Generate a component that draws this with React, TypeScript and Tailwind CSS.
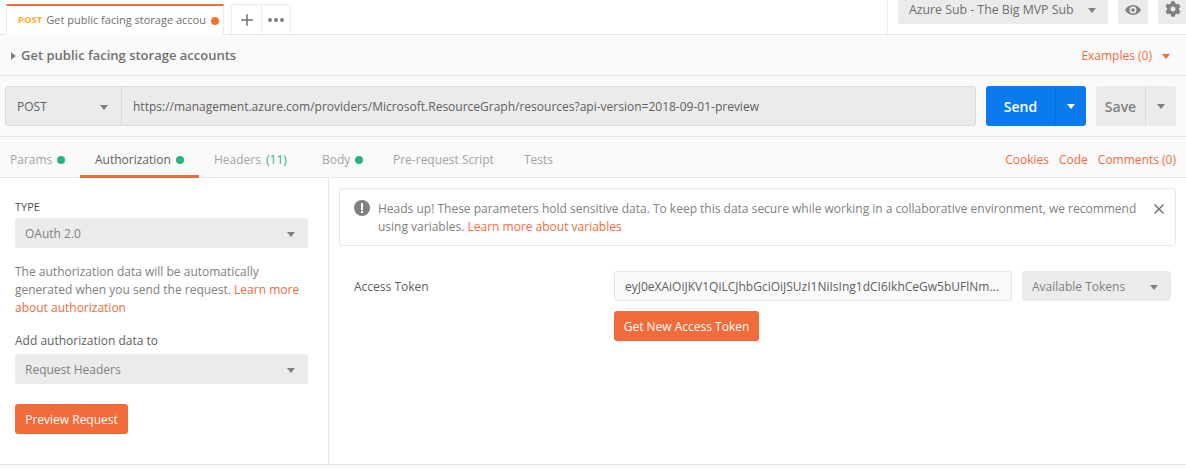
import React from 'react';
import { X, Plus } from 'lucide-react';
import { FaCog } from 'react-icons/fa';

const Caret: React.FC<{ className?: string }> = ({ className = 'border-t-[#808080]' }) => (
  <span className={`w-0 h-0 border-x-[4px] border-x-transparent border-t-[5px] ${className}`} />
);

const Dot: React.FC = () => <span className="w-2 h-2 rounded-full bg-[#26b47f] ml-[5px]" />;

const Select: React.FC<{ label: string; className: string }> = ({ label, className }) => (
  <div className={`flex items-center justify-between bg-[#ebebeb] rounded-[3px] text-[#808080] pt-[2px] ${className}`}>
    <span>{label}</span>
    <Caret />
  </div>
);

const OrangeButton: React.FC<{ label: string; className: string }> = ({ label, className }) => (
  <button className={`h-[30px] pt-[2px] bg-[#f26b3a] text-white text-xs font-medium rounded-[3px] ${className}`}>{label}</button>
);

const TopBar: React.FC = () => (
  <div className="h-[35px] flex border-b border-[#e6e6e6] bg-white">
    <div className="ml-[6px] mt-[4px] w-[218px] h-[31px] -mb-px bg-white border-x border-[#ececec] border-t-2 border-t-[#f26b3a] flex items-center pl-[11px] pr-[4px] text-[11px] text-[#707070]">
      <span className="text-[9.5px] font-bold text-[#f4b02e] mr-[4px]">POST</span>
      <span className="w-[160px] overflow-hidden whitespace-nowrap">Get public facing storage accounts</span>
      <span className="w-2 h-2 rounded-full bg-[#f5722c] ml-[5px]" />
    </div>
    <div className="ml-[7px] mt-[4px] h-[30px] flex border border-b-0 border-[#ececec] rounded-t-[3px]">
      <div className="w-[30px] flex items-center justify-center border-r border-[#ececec]">
        <Plus size={18} strokeWidth={2} className="text-[#707070]" />
      </div>
      <div className="w-[28px] flex items-center justify-center gap-[2px]">
        <span className="w-1 h-1 rounded-full bg-[#808080]" />
        <span className="w-1 h-1 rounded-full bg-[#808080]" />
        <span className="w-1 h-1 rounded-full bg-[#808080]" />
      </div>
    </div>
    <div className="ml-auto w-[299px] flex border-l border-[#ececec] pl-[10px]">
      <div className="w-[210px] h-6 pb-1 bg-[#ebebeb] rounded-b-[3px] flex items-center justify-between pl-[11px] pr-[12px] text-[12.3px] text-[#6e6e6e] font-medium">
        <span>Azure Sub - The Big MVP Sub</span>
        <Caret />
      </div>
      <div className="ml-[10px] w-[30px] h-6 pb-[5px] bg-[#ebebeb] rounded-b-[3px] flex items-center justify-center">
        <svg width="16" height="10" viewBox="0 0 16 10">
          <path fillRule="evenodd" fill="#808080" d="M8 0c3.5 0 6.4 2.2 8 5-1.600 2.800-4.500 5-8 5S1.600 7.800 0 5c1.600-2.800 4.500-5 8-5zm0 1.500a3.500 3.500 0 1 0 0 7 3.500 3.500 0 0 0 0-7zM8 3.200a1.800 1.800 0 1 1 0 3.600 1.800 1.800 0 0 1 0-3.600z" />
        </svg>
      </div>
      <div className="ml-[10px] flex-1 h-6 pt-px bg-[#ebebeb] rounded-bl-[3px] pl-[7px] flex items-start">
        <FaCog size={16} className="text-[#808080]" />
      </div>
    </div>
  </div>
);

const TitleBar: React.FC = () => (
  <div className="h-[41px] pt-[2px] flex items-center border-b border-[#e6e6e6] pl-[11px] pr-[16px]">
    <span className="w-0 h-0 border-y-[4px] border-y-transparent border-l-[5px] border-l-[#808080] mr-[5px]" />
    <span className="text-[13px] font-semibold text-[#707070]">Get public facing storage accounts</span>
    <span className="ml-auto text-xs text-[#f26b3a]">Examples (0)</span>
    <Caret className="ml-[10px] border-t-[#f26b3a]" />
  </div>
);

const UrlBar: React.FC = () => (
  <div className="h-[61px] flex items-center border-b border-[#e6e6e6] pl-[5px] pr-[10px]">
    <div className="w-[971px] h-10 flex bg-[#ebebeb] border border-[#d9d9d9] rounded-[3px]">
      <div className="w-[116px] pt-[2px] flex items-center justify-between pl-[11px] pr-[13px] border-r border-[#d9d9d9] text-xs text-[#606060]">
        <span>POST</span>
        <Caret />
      </div>
      <div className="flex-1 pt-px flex items-center pl-[11px] text-xs text-[#606060] whitespace-nowrap">
        https://management.azure.com/providers/Microsoft.ResourceGraph/resources?api-version=2018-09-01-preview
      </div>
    </div>
    <div className="ml-[10px] w-[100px] h-10 flex bg-[#097bed] rounded-[3px] text-white">
      <div className="w-[69px] pt-[2px] flex items-center justify-center text-sm font-semibold">Send</div>
      <div className="flex-1 flex items-center justify-center border-l border-[#0a6fd4]">
        <Caret className="border-t-white" />
      </div>
    </div>
    <div className="ml-[10px] w-20 h-10 flex bg-[#ebebeb] rounded-[3px]">
      <div className="w-[49px] pt-[2px] flex items-center justify-center text-sm font-semibold text-[#808080]">Save</div>
      <div className="flex-1 flex items-center justify-center border-l border-[#d9d9d9]">
        <Caret />
      </div>
    </div>
  </div>
);

const Tabs: React.FC = () => (
  <div className="h-[41px] flex items-center border-b border-[#e6e6e6] pl-[10px] pr-[10px] pt-[5px] text-xs text-[#a3a3a3]">
    <span className="flex items-center w-[70px]">Params<Dot /></span>
    <div className="relative flex items-center h-full w-[119px] text-[#606060] pl-[15px]">
      Authorization<Dot />
      <span className="absolute left-0 right-0 -bottom-px h-[3px] bg-[#f26b3a]" />
    </div>
    <span className="ml-[15px] w-[108px]">Headers <span className="text-[#26b47f] ml-0.5">(11)</span></span>
    <span className="flex items-center w-[71px]">Body<Dot /></span>
    <span className="w-[131px]">Pre-request Script</span>
    <span>Tests</span>
    <div className="ml-auto flex gap-[10px] text-[#f26b3a]">
      <span>Cookies</span>
      <span>Code</span>
      <span>Comments (0)</span>
    </div>
  </div>
);

const AuthPanel: React.FC = () => (
  <div className="w-[329px] border-r border-[#e6e6e6] pl-[15px] pr-5 pt-5 text-xs">
    <div className="text-[11px] leading-[18px] font-medium text-[#505050]">TYPE</div>
    <Select label="OAuth 2.0" className="h-[30px] px-[10px] mt-[2px] pr-[13px]" />
    <p className="mt-[15px] leading-[18px] text-[#808080] whitespace-nowrap">
      The authorization data will be automatically<br />
      generated when you send the request. <span className="text-[#f26b3a]">Learn more</span><br />
      <span className="text-[#f26b3a]">about authorization</span>
    </p>
    <div className="mt-[15px] leading-[18px] text-[#606060]">Add authorization data to</div>
    <Select label="Request Headers" className="h-[30px] px-[10px] mt-[4px] pr-[13px]" />
    <OrangeButton label="Preview Request" className="mt-5 w-[113px]" />
  </div>
);

const TokenPanel: React.FC = () => (
  <div className="flex-1 pl-[10px] pr-[10px] pt-[10px] text-xs">
    <div className="relative h-[58px] border border-[#e6e6e6] rounded-[3px] pl-[14px] pr-8 pt-[11px] flex">
      <svg width="16" height="16" viewBox="0 0 16 16" className="shrink-0">
        <circle cx="8" cy="8" r="8" fill="#808080" />
        <rect x="7" y="3" width="2" height="7" fill="#fff" />
        <rect x="7" y="11" width="2" height="2" fill="#fff" />
      </svg>
      <p className="ml-[8px] leading-[18px] text-[#808080] whitespace-nowrap">
        Heads up! These parameters hold sensitive data. To keep this data secure while working in a collaborative environment, we recommend<br />
        using variables. <span className="text-[#f26b3a]">Learn more about variables</span>
      </p>
      <X size={16} strokeWidth={2} className="absolute right-[8px] top-[12px] text-[#707070]" />
    </div>
    <div className="mt-[25px] flex">
      <div className="w-[275px] pl-[15px] h-[30px] pt-[2px] flex items-center text-[#606060]">Access Token</div>
      <div>
        <div className="flex">
          <div className="w-[398px] h-[30px] pt-[2px] flex items-center pl-[10px] border border-[#e6e6e6] rounded-[3px] bg-[#fafafa] text-[#606060] whitespace-nowrap overflow-hidden">
            eyJ0eXAiOiJKV1QiLCJhbGciOiJSUzI1NiIsIng1dCI6IkhCeGw5bUFlNm...
          </div>
          <Select label="Available Tokens" className="ml-[10px] w-[149px] h-[30px] pl-[10px] pr-[13px]" />
        </div>
        <OrangeButton label="Get New Access Token" className="mt-[10px] w-[145px]" />
      </div>
    </div>
  </div>
);

const App: React.FC = () => (
  <div className="w-[1186px] h-[468px] overflow-hidden bg-[#fafafa] font-['Open_Sans',sans-serif] flex flex-col">
    <TopBar />
    <TitleBar />
    <UrlBar />
    <Tabs />
    <div className="h-[287px] flex bg-white border-b border-[#e6e6e6]">
      <AuthPanel />
      <TokenPanel />
    </div>
  </div>
);

export default App;
